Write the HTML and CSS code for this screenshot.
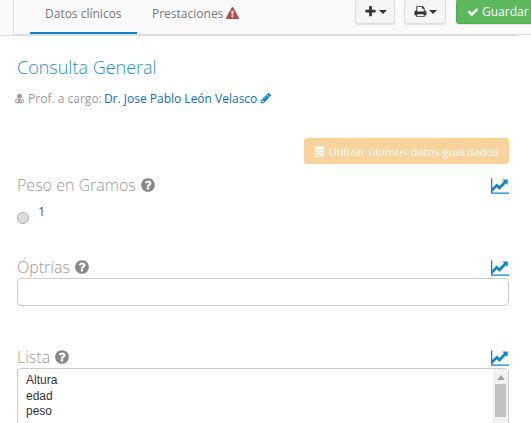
FILE: index.html
```html
<!DOCTYPE html>
<html lang="es">
<head>
  <meta charset="UTF-8" />
  <title>Consulta General</title>
  <link rel="stylesheet" href="styles.css">
</head>
<body>
  <svg class="defs" width="0" height="0">
    <symbol id="i-warn" viewBox="0 0 1792 1792"><path d="M1024 1375v-190q0-14-9.5-23.5t-22.5-9.5h-192q-13 0-22.5 9.5t-9.5 23.5v190q0 14 9.5 23.5t22.5 9.5h192q13 0 22.5-9.5t9.5-23.5zm-2-374l18-459q0-12-10-19-13-11-24-11h-220q-11 0-24 11-10 7-10 21l17 457q0 10 10 16.5t24 6.5h185q14 0 23.5-6.5t10.5-16.5zm-14-934l768 1408q35 63-2 126-17 29-46.5 46t-63.5 17h-1536q-34 0-63.5-17t-46.5-46q-37-63-2-126l768-1408q17-31 47-49t65-18 65 18 47 49z"/></symbol>
    <symbol id="i-help" viewBox="0 0 1792 1792"><path d="M1024 1376v-192q0-14-9-23t-23-9h-192q-14 0-23 9t-9 23v192q0 14 9 23t23 9h192q14 0 23-9t9-23zm256-672q0-88-55.5-163t-138.5-116-170-41q-243 0-371 213-15 24 8 42l132 100q7 6 19 6 16 0 25-12 53-68 86-92 34-24 86-24 48 0 85.5 26t37.5 59q0 38-20 61t-68 45q-63 28-115.5 86.5t-52.5 125.5v36q0 14 9 23t23 9h192q14 0 23-9t9-23q0-19 21.5-49.5t54.5-49.5q32-18 49-28.5t46-35 44.5-48 28-60.5 12.5-81zm384 192q0 209-103 385.5t-279.5 279.5-385.5 103-385.5-103-279.5-279.5-103-385.5 103-385.5 279.5-279.5 385.5-103 385.5 103 279.5 279.5 103 385.5z"/></symbol>
    <symbol id="i-chart" viewBox="0 0 1792 1792"><path d="M1792 1536v128h-1792v-1536h128v1408h1664zm-128-1248v435q0 21-19.5 29.5t-35.5-7.5l-121-121-633 633q-10 10-23 10t-23-10l-233-233-416 416-192-192 585-585q10-10 23-10t23 10l233 233 464-464-121-121q-16-16-7.5-35.5t29.5-19.5h435q14 0 23 9t9 23z"/></symbol>
    <symbol id="i-pencil" viewBox="0 0 1792 1792"><path d="M491 1536l91-91-235-235-91 91v107h128v128h107zm523-928q0-22-22-22-10 0-17 7l-542 542q-7 7-7 17 0 22 22 22 10 0 17-7l542-542q7-7 7-17zm-54-192l416 416-832 832h-416v-416zm683 96q0 53-37 90l-166 166-416-416 166-165q36-38 90-38 53 0 91 38l235 234q37 39 37 91z"/></symbol>
    <symbol id="i-plus" viewBox="0 0 1792 1792"><path d="M1600 736v192q0 40-28 68t-68 28h-416v416q0 40-28 68t-68 28h-192q-40 0-68-28t-28-68v-416h-416q-40 0-68-28t-28-68v-192q0-40 28-68t68-28h416v-416q0-40 28-68t68-28h192q40 0 68 28t28 68v416h416q40 0 68 28t28 68z"/></symbol>
    <symbol id="i-print" viewBox="0 0 1792 1792"><path d="M448 1536h896v-256h-896v256zm0-640h896v-384h-160q-40 0-68-28t-28-68v-160h-640v640zm1152 64q0-26-19-45t-45-19-45 19-19 45 19 45 45 19 45-19 19-45zm128 0v416q0 13-9.5 22.5t-22.5 9.5h-224v160q0 40-28 68t-68 28h-960q-40 0-68-28t-28-68v-160h-224q-13 0-22.5-9.5t-9.5-22.5v-416q0-79 56.5-135.5t135.5-56.5h64v-544q0-40 28-68t68-28h672q40 0 88 20t76 48l152 152q28 28 48 76t20 88v256h64q79 0 135.5 56.5t56.5 135.5z"/></symbol>
    <symbol id="i-check" viewBox="0 0 1792 1792"><path d="M1671 566q0 40-28 68l-724 724-136 136q-28 28-68 28t-68-28l-136-136-362-362q-28-28-28-68t28-68l136-136q28-28 68-28t68 28l294 295 656-657q28-28 68-28t68 28l136 136q28 28 28 68z"/></symbol>
    <symbol id="i-db" viewBox="0 0 1792 1792"><path d="M896 768q237 0 443-43t325-127v170q0 69-103 128t-280 93.5-385 34.5-385-34.5-280-93.5-103-128v-170q119 84 325 127t443 43zm0 768q237 0 443-43t325-127v170q0 69-103 128t-280 93.5-385 34.5-385-34.5-280-93.5-103-128v-170q119 84 325 127t443 43zm0-384q237 0 443-43t325-127v170q0 69-103 128t-280 93.5-385 34.5-385-34.5-280-93.5-103-128v-170q119 84 325 127t443 43zm0-1152q208 0 385 34.5t280 93.5 103 128v128q0 69-103 128t-280 93.5-385 34.5-385-34.5-280-93.5-103-128v-128q0-69 103-128t280-93.5 385-34.5z"/></symbol>
    <symbol id="i-doctor" viewBox="0 0 1792 1792"><path d="M576 1344q0 26-19 45t-45 19-45-19-19-45 19-45 45-19 45 19 19 45zm1024 61q0 121-73 190t-194 69h-874q-121 0-194-69t-73-190q0-68 5.5-131t24-138 47.5-132.5 81-103 120-60.5q-22 52-22 120v203q-58 20-93 70t-35 111q0 80 56 136t136 56 136-56 56-136q0-61-35.5-111t-92.5-70v-203q0-62 25-93 132 104 295 104t295-104q25 31 25 93v64q-106 0-181 75t-75 181v89q-32 29-32 71 0 40 28 68t68 28 68-28 28-68q0-42-32-71v-89q0-52 38-90t90-38 90 38 38 90v89q-32 29-32 71 0 40 28 68t68 28 68-28 28-68q0-42-32-71v-89q0-68-34.5-127.5t-93.5-93.5q0-10 .5-42.5t0-48-2.5-41.5-7-47-13-40q68 15 120 60.5t81 103 47.5 132.5 24 138 5.5 131zm-320-893q0 159-112.5 271.5t-271.5 112.5-271.5-112.5-112.5-271.5 112.5-271.5 271.5-112.5 271.5 112.5 112.5 271.5z"/></symbol>
  </svg>

  <!-- top bar with tabs and actions -->
  <div class="topbar">
    <div class="tabs">
      <a class="tab active" href="#">Datos clínicos</a>
      <a class="tab" href="#">Prestaciones <svg class="icon warn"><use href="#i-warn"/></svg></a>
    </div>
    <div class="actions">
      <button class="btn"><svg class="icon"><use href="#i-plus"/></svg><span class="caret"></span></button>
      <button class="btn"><svg class="icon"><use href="#i-print"/></svg><span class="caret"></span></button>
      <button class="btn btn-save"><svg class="icon"><use href="#i-check"/></svg> Guardar</button>
    </div>
  </div>

  <div class="content">
    <h1>Consulta General</h1>
    <p class="prof">
      <svg class="icon doctor"><use href="#i-doctor"/></svg>
      Prof. a cargo: <a href="#">Dr. Jose Pablo León Velasco</a>
      <svg class="icon pencil"><use href="#i-pencil"/></svg>
    </p>

    <div class="reuse">
      <button class="btn-reuse"><svg class="icon"><use href="#i-db"/></svg> Utilizar últimos datos guardados</button>
    </div>

    <div class="field field-peso">
      <div class="field-head">
        <label>Peso en Gramos <svg class="icon help"><use href="#i-help"/></svg></label>
        <svg class="icon chart"><use href="#i-chart"/></svg>
      </div>
      <div class="radio-row">
        <span class="radio"></span>
        <span class="radio-label">1</span>
      </div>
    </div>

    <div class="field field-optrias">
      <div class="field-head">
        <label>Optrías <svg class="icon help"><use href="#i-help"/></svg></label>
        <svg class="icon chart"><use href="#i-chart"/></svg>
      </div>
      <div class="text-input"></div>
    </div>

    <div class="field field-lista">
      <div class="field-head">
        <label>Lista <svg class="icon help"><use href="#i-help"/></svg></label>
        <svg class="icon chart"><use href="#i-chart"/></svg>
      </div>
      <div class="listbox">
        <ul>
          <li>Altura</li>
          <li>edad</li>
          <li>peso</li>
        </ul>
        <div class="scrollbar">
          <span class="arrow"></span>
          <span class="thumb"></span>
        </div>
      </div>
    </div>
  </div>
</body>
</html>
```

FILE: styles.css
```css
* {
  margin: 0;
  padding: 0;
  box-sizing: border-box;
}

html, body {
  height: 423px;
  overflow: hidden;
}

body {
  font-family: "Open Sans", sans-serif;
  font-size: 12px;
  color: #777;
  background: #fff;
}

.defs {
  position: absolute;
}

.icon {
  width: 1em;
  height: 1em;
  fill: currentColor;
  vertical-align: -0.12em;
}

.topbar {
  display: flex;
  justify-content: space-between;
  height: 35px;
  margin-left: 13px;
  padding-left: 16px;
  background: #fafafa;
  border-left: 1px solid #ddd;
  border-bottom: 1px solid #ddd;
  box-shadow: -13px 0 0 #fafafa, -13px 1px 0 #ddd;
}

.tabs {
  display: flex;
}

.tab {
  display: block;
  height: 34px;
  padding: 5px 15px 0;
  font-size: 12px;
  line-height: 18px;
  color: #777;
  text-decoration: none;
}

.tab.active {
  width: 107px;
  border-bottom: 2px solid #0a85c7;
}

.tab .warn {
  width: 13px;
  height: 13px;
  color: #b94a48;
  vertical-align: -2px;
}

.actions {
  display: flex;
  gap: 9px;
  width: 176px;
  flex: none;
  height: 25px;
  margin-top: -1px;
}

.btn {
  display: flex;
  flex: none;
  align-items: center;
  justify-content: center;
  gap: 2px;
  width: 40px;
  height: 25px;
  color: #333;
  background: #f5f5f5;
  border: 1px solid #ddd;
  border-radius: 3px;
  font-size: 13px;
  box-shadow: 0 1px 1px rgba(0, 0, 0, 0.1);
}

.btn + .btn {
  width: 42px;
}

.caret {
  width: 0;
  height: 0;
  border-top: 4px solid #333;
  border-left: 4px solid transparent;
  border-right: 4px solid transparent;
}

.btn.btn-save {
  width: 80px;
  margin-left: 1px;
  gap: 3px;
  justify-content: flex-start;
  padding-left: 10px;
  color: #fff;
  background: #5cb85c;
  border-color: #4cae4c;
  font-family: "Open Sans", sans-serif;
  font-size: 12px;
  white-space: nowrap;
}

.content {
  padding: 0 22px 0 17px;
}

h1 {
  margin-top: 20px;
  font-size: 18px;
  font-weight: 300;
  line-height: 24px;
  color: #1e8fd0;
}

.prof {
  margin-top: 11px;
  font-size: 12px;
  line-height: 17px;
  color: #999;
  margin-left: -3px;
}

.prof a {
  margin-left: -1px;
  color: #0a6ebd;
  text-decoration: none;
}

.prof .doctor {
  width: 11px;
  height: 11px;
}

.prof .pencil {
  width: 12px;
  height: 12px;
  color: #0a85d1;
}

.reuse {
  display: flex;
  justify-content: flex-end;
  margin-top: 31px;
}

.btn-reuse {
  width: 205px;
  height: 26px;
  color: #fff;
  background: #fad29c;
  border: 1px solid #f8cf95;
  border-radius: 3px;
  font-family: "Open Sans", sans-serif;
  font-size: 11.25px;
  white-space: nowrap;
}

.field-head {
  display: flex;
  justify-content: space-between;
  align-items: flex-end;
}

.field-head label {
  font-size: 16px;
  font-weight: 300;
  line-height: 20px;
  color: #999;
}

.help {
  width: 16px;
  height: 16px;
  color: #888;
  vertical-align: -2px;
}

.chart {
  width: 18px;
  height: 18px;
  color: #0a85d1;
}

.field-peso {
  margin-top: 11px;
}

.radio-row {
  display: flex;
  margin-top: 12px;
  height: 50px;
}

.radio {
  width: 12px;
  height: 12px;
  margin-top: 5px;
  background: #ddd;
  border: 1px solid #aaa;
  border-radius: 50%;
}

.radio-label {
  margin-left: 9px;
  margin-top: -2px;
  font-size: 13px;
  line-height: 12px;
  color: #6b5a35;
}

.text-input {
  height: 28px;
  background: #fff;
  border: 1px solid #ccc;
  border-radius: 4px;
  margin-top: 1px;
}

.field-lista {
  margin-top: 41px;
}

.listbox {
  display: flex;
  justify-content: space-between;
  height: 70px;
  margin-top: 1px;
  background: #fff;
  border: 1px solid #ccc;
  border-radius: 4px 4px 0 0;
}

.listbox ul {
  list-style: none;
  padding: 4px 8px;
  font-family: "Liberation Sans", sans-serif;
  font-size: 12px;
  line-height: 15.5px;
  color: #333;
}

.scrollbar {
  display: flex;
  flex-direction: column;
  align-items: center;
  width: 15px;
  background: #f1f1f1;
}

.arrow {
  width: 0;
  height: 0;
  margin-top: 6px;
  border-bottom: 5px solid #a3a3a3;
  border-left: 4px solid transparent;
  border-right: 4px solid transparent;
}

.thumb {
  width: 11px;
  height: 33px;
  margin-top: 4px;
  background: #c1c1c1;
}
```
